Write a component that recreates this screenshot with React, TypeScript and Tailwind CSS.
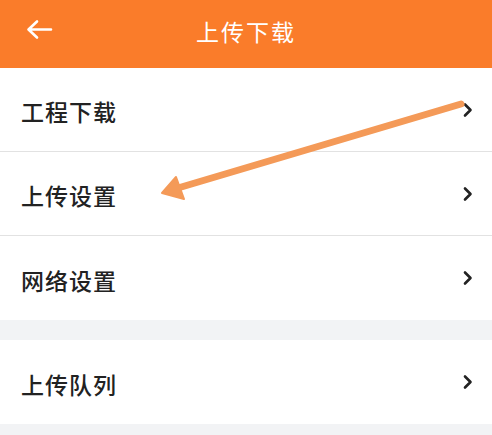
import React from 'react'

const font = { fontFamily: '"Noto Sans CJK SC", "Noto Sans", sans-serif' }

const Chevron = () => (
  <svg width="12" height="16" viewBox="0 0 12 16" className="text-[#222]">
    <path d="M3 2.5 L8.5 8 L3 13.5" fill="none" stroke="currentColor" strokeWidth="2.6" strokeLinecap="round" strokeLinejoin="round" />
  </svg>
)

const Row = ({ label, border }: { label: string; border?: boolean }) => (
  <div className={`flex h-[84px] items-center justify-between bg-white pl-[21px] pr-[18px] ${border ? 'border-b border-[#e2e2e2]' : ''}`}>
    <span className="pt-[4px] text-[23px] font-medium tracking-[1px] text-[#222]">{label}</span>
    <Chevron />
  </div>
)

export default function App() {
  return (
    <div className="relative h-[435px] w-[492px] overflow-hidden bg-[#f2f3f5]" style={font}>
      <header className="relative flex h-[68px] items-center justify-center bg-[#fa7c2a]">
        <button className="absolute left-[24px] top-[17px] text-white">
          <svg width="30" height="26" viewBox="0 0 30 26">
            <path d="M27 12.5 H5 M13 4.5 L4.5 12.5 L13 20.5" fill="none" stroke="currentColor" strokeWidth="2.6" strokeLinecap="round" strokeLinejoin="round" />
          </svg>
        </button>
        <h1 className="-mt-[5px] text-[23px] tracking-[2px] text-white">上传下载</h1>
      </header>

      <div className="bg-white">
        <Row label="工程下载" border />
        <Row label="上传设置" border />
        <Row label="网络设置" />
      </div>

      <div className="mt-[20px] bg-white">
        <Row label="上传队列" />
      </div>

      <svg className="pointer-events-none absolute left-0 top-0" width="492" height="435" viewBox="0 0 492 435">
        <line x1="461" y1="104" x2="178" y2="188" stroke="#f49a58" strokeWidth="7" strokeLinecap="round" />
        <polygon points="162,193 176,177 184,199" fill="#f49a58" stroke="#f49a58" strokeWidth="2" strokeLinejoin="round" />
      </svg>
    </div>
  )
}
